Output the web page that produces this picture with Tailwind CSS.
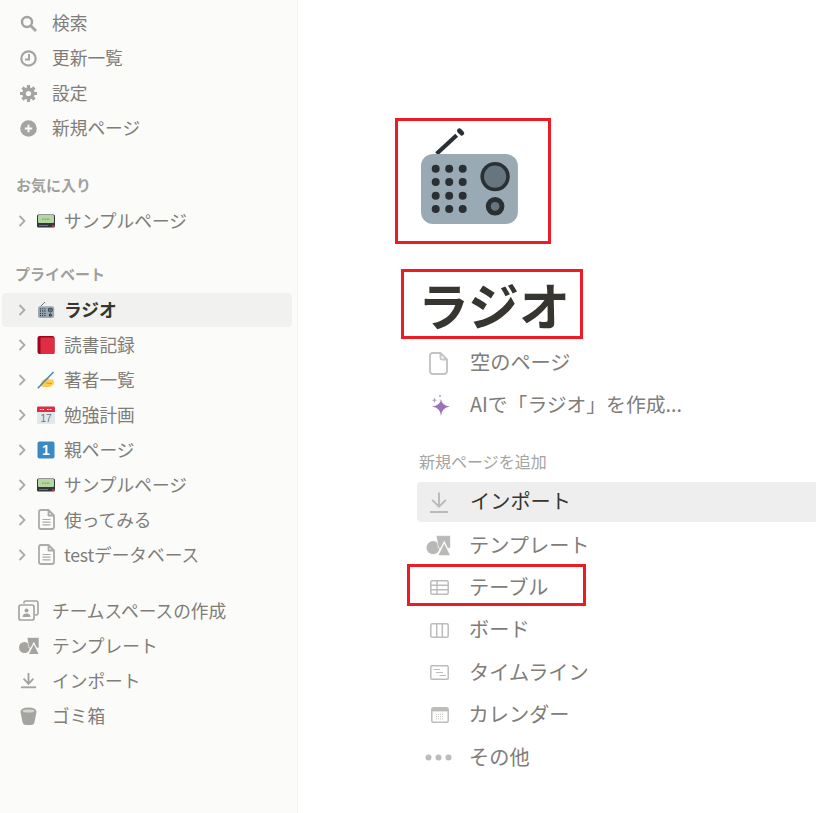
<!DOCTYPE html>
<html lang="ja">
<head>
  <meta charset="UTF-8" />
  <title>ラジオ</title>
  <script src="https://cdn.jsdelivr.net/npm/@tailwindcss/browser@4"></script>
</head>
<body class="h-[813px] overflow-hidden bg-white font-['Noto_Sans_CJK_JP','Noto_Sans',sans-serif] text-[17.7px]">
  <!-- shared icons -->
  <svg class="absolute w-0 h-0" aria-hidden="true">
    <symbol id="chev" viewBox="0 0 10 14"><path d="M2.5 2 L7.5 7 L2.5 12" fill="none" stroke="#ababa9" stroke-width="1.8"/></symbol>
    <symbol id="radio" viewBox="0 0 36 36">
      <path d="M7.2 10.6 L13.9 4.4" stroke="#292f33" stroke-width="1.4"/>
      <path d="M14.8 2.9 L15.6 3.7" stroke="#292f33" stroke-width="1.6" stroke-linecap="round"/>
      <rect x="2" y="10.7" width="32.3" height="23.3" rx="4" fill="#99aab5"/>
      <g fill="#292f33">
        <circle cx="6.9" cy="15.6" r="1.33"/><circle cx="11.4" cy="15.6" r="1.33"/><circle cx="15.9" cy="15.6" r="1.33"/>
        <circle cx="6.9" cy="20" r="1.33"/><circle cx="11.4" cy="20" r="1.33"/><circle cx="15.9" cy="20" r="1.33"/>
        <circle cx="6.9" cy="24.6" r="1.33"/><circle cx="11.4" cy="24.6" r="1.33"/><circle cx="15.9" cy="24.6" r="1.33"/>
        <circle cx="6.9" cy="29" r="1.33"/><circle cx="11.4" cy="29" r="1.33"/><circle cx="15.9" cy="29" r="1.33"/>
        <circle cx="26.7" cy="18.2" r="4.9"/><circle cx="26.7" cy="28.1" r="3.1"/>
      </g>
      <circle cx="26.7" cy="18.2" r="3.7" fill="#66757f"/>
      <circle cx="26.7" cy="28.1" r="1.45" fill="#66757f"/>
    </symbol>
    <symbol id="pager" viewBox="0 0 18 18">
      <rect x="0" y="2.5" width="18" height="13" rx="1.5" fill="#31373d"/>
      <rect x="1" y="3" width="16" height="8" rx="1" fill="#b4d7a0"/>
      <path d="M5 7.2h8" stroke="#77a05f" stroke-width="1.2" stroke-dasharray="1 .6"/>
      <rect x="15" y="13" width="2.4" height="1.8" fill="#dd2e44"/>
      <rect x="2" y="13" width="9" height="1" fill="#66757f"/>
    </symbol>
    <symbol id="book" viewBox="0 0 18 18">
      <rect x="0.5" y="0" width="17" height="18" rx="2" fill="#a0041e"/>
      <rect x="3.5" y="1.6" width="14" height="16.4" rx="1" fill="#dd2e44"/>
    </symbol>
    <symbol id="hand" viewBox="0 0 18 18">
      <path d="M5 9.5 L10.5 6.5 L12.5 8.5 L16 8.5 Q18 11 16.5 13.5 L13 16 L6 16 Q3.5 15.5 3.5 13 Z" fill="#ffcc4d"/>
      <path d="M0.8 17.2 L16.5 1" stroke="#3b88c3" stroke-width="1.5"/>
      <path d="M9 12 L15 12.6" stroke="#f19020" stroke-width="1"/>
    </symbol>
    <symbol id="doc" viewBox="0 0 17 21">
      <path d="M3 1 H10.5 L16 6.5 V18 Q16 20 14 20 H3 Q1 20 1 18 V3 Q1 1 3 1 Z M10.5 1 V6.5 H16" fill="none" stroke="currentColor" stroke-width="1.8" stroke-linejoin="round"/>
      <path d="M4.5 10.5h8M4.5 13.2h8M4.5 15.9h8" stroke="currentColor" stroke-width="1.2"/>
    </symbol>
    <symbol id="blank" viewBox="0 0 19 23">
      <path d="M3.5 1 H11.5 L18 7.5 V19 Q18 22 15 22 H4 Q1 22 1 19 V3.5 Q1 1 3.5 1 Z M11.5 1 V6 Q11.5 7.5 13 7.5 H18" fill="none" stroke="currentColor" stroke-width="1.9" stroke-linejoin="round"/>
    </symbol>
    <symbol id="shapes" viewBox="0 0 20 17.5">
      <circle cx="5.5" cy="10.5" r="5.5" fill="currentColor"/>
      <path d="M8 .5 H20 V11 H10 Z" fill="currentColor" stroke="#fcfcfb" stroke-width="0.6"/>
      <path d="M14.8 6 L20.5 17.5 H9 Z" fill="currentColor" stroke="#fcfcfb" stroke-width="1.2"/>
    </symbol>
    <symbol id="download" viewBox="0 0 18 18">
      <path d="M9 1 V11.5 M3.8 7 L9 12.5 L14.2 7" fill="none" stroke="currentColor" stroke-width="2"/>
      <path d="M1 16.2 H17" stroke="currentColor" stroke-width="2"/>
    </symbol>
  </svg>

  <div class="flex h-full">
    <!-- sidebar -->
    <aside class="w-[298px] shrink-0 h-full bg-[#fbfbfa] border-r border-[#f3f3f1] pt-[5.5px] text-[#807d78] [&_span]:pb-[1px]">
      <div class="flex items-center h-[35px] pl-[20px] gap-[15px]">
        <svg class="w-[17px] h-[17px]" viewBox="0 0 17 17"><circle cx="7" cy="7" r="5" fill="none" stroke="#a5a4a1" stroke-width="2.5"/><path d="M10.5 10.5 L16 16" stroke="#a5a4a1" stroke-width="2.8"/></svg>
        <span>検索</span>
      </div>
      <div class="flex items-center h-[35px] pl-[20px] gap-[15px]">
        <svg class="w-[17px] h-[17px]" viewBox="0 0 17 17"><circle cx="8.5" cy="8.5" r="7.2" fill="none" stroke="#a5a4a1" stroke-width="2.2"/><path d="M9 4 V9.4 H5" fill="none" stroke="#a5a4a1" stroke-width="2"/></svg>
        <span>更新一覧</span>
      </div>
      <div class="flex items-center h-[35px] pl-[20px] gap-[15px]">
        <svg class="w-[17px] h-[17px]" viewBox="0 0 17 17"><g stroke="#a5a4a1" stroke-width="3.2"><path d="M8.5 0 V17M0 8.5 H17M2.5 2.5 L14.5 14.5M14.5 2.5 L2.5 14.5"/></g><circle cx="8.5" cy="8.5" r="6.2" fill="#a5a4a1"/><circle cx="8.5" cy="8.5" r="2.6" fill="#fbfbfa"/></svg>
        <span>設定</span>
      </div>
      <div class="flex items-center h-[35px] pl-[20px] gap-[15px]">
        <svg class="w-[17px] h-[17px]" viewBox="0 0 17 17"><circle cx="8.5" cy="8.5" r="8.3" fill="#a5a4a1"/><path d="M8.5 4.8 V12.2M4.8 8.5 H12.2" stroke="#fbfbfa" stroke-width="1.9"/></svg>
        <span>新規ページ</span>
      </div>

      <div class="mt-[24px] mb-[2px] h-[32px] flex items-center pl-[16px] text-[15px] font-bold text-[#a09f9b]">お気に入り</div>
      <div class="flex items-center h-[35px] pl-[17px]">
        <svg class="w-[10px] h-[14px]"><use href="#chev"/></svg>
        <svg class="w-[18px] h-[18px] ml-[10px]"><use href="#pager"/></svg>
        <span class="ml-[9px]">サンプルページ</span>
      </div>

      <div class="mt-[20px] mb-[2px] h-[32px] flex items-center pl-[15px] text-[15px] font-bold text-[#a09f9b]">プライベート</div>
      <div class="flex items-center h-[34px] mx-[2px] my-[0.5px] w-[290px] pl-[15px] rounded bg-[#f1f1ef] font-bold text-[#37352f]">
        <svg class="w-[10px] h-[14px]"><use href="#chev"/></svg>
        <svg class="w-[18px] h-[18px] ml-[10px]"><use href="#radio"/></svg>
        <span class="ml-[9px]">ラジオ</span>
      </div>
      <div class="flex items-center h-[35px] pl-[17px]">
        <svg class="w-[10px] h-[14px]"><use href="#chev"/></svg>
        <svg class="w-[18px] h-[18px] ml-[10px]"><use href="#book"/></svg>
        <span class="ml-[9px]">読書記録</span>
      </div>
      <div class="flex items-center h-[35px] pl-[17px]">
        <svg class="w-[10px] h-[14px]"><use href="#chev"/></svg>
        <svg class="w-[18px] h-[18px] ml-[10px]"><use href="#hand"/></svg>
        <span class="ml-[9px]">著者一覧</span>
      </div>
      <div class="flex items-center h-[35px] pl-[17px]">
        <svg class="w-[10px] h-[14px]"><use href="#chev"/></svg>
        <svg class="w-[18px] h-[18px] ml-[10px]" viewBox="0 0 18 18">
          <rect x="0" y="4" width="18" height="14" rx="1" fill="#e1e8ed"/>
          <path d="M0 1.5 Q0 .5 1 .5 H17 Q18 .5 18 1.5 V6 H0 Z" fill="#dd2e44"/>
          <path d="M3 3.5h4M10 3.5h5" stroke="#fff" stroke-width="1.2" stroke-dasharray="1 .5"/>
          <text x="9" y="16" text-anchor="middle" font-size="10" font-family="Liberation Sans" fill="#66757f">17</text>
        </svg>
        <span class="ml-[9px]">勉強計画</span>
      </div>
      <div class="flex items-center h-[35px] pl-[17px]">
        <svg class="w-[10px] h-[14px]"><use href="#chev"/></svg>
        <svg class="w-[18px] h-[18px] ml-[10px]" viewBox="0 0 18 18">
          <rect x="0.5" y="0.5" width="17" height="17" rx="2" fill="#3b88c3"/>
          <text x="9" y="14.2" text-anchor="middle" font-size="14" font-weight="700" font-family="Liberation Sans" fill="#fff">1</text>
        </svg>
        <span class="ml-[9px]">親ページ</span>
      </div>
      <div class="flex items-center h-[35px] pl-[17px]">
        <svg class="w-[10px] h-[14px]"><use href="#chev"/></svg>
        <svg class="w-[18px] h-[18px] ml-[10px]"><use href="#pager"/></svg>
        <span class="ml-[9px]">サンプルページ</span>
      </div>
      <div class="flex items-center h-[35px] pl-[17px]">
        <svg class="w-[10px] h-[14px]"><use href="#chev"/></svg>
        <svg class="w-[17px] h-[21px] ml-[11px] text-[#ababa9]"><use href="#doc"/></svg>
        <span class="ml-[9px]">使ってみる</span>
      </div>
      <div class="flex items-center h-[35px] pl-[17px]">
        <svg class="w-[10px] h-[14px]"><use href="#chev"/></svg>
        <svg class="w-[17px] h-[21px] ml-[11px] text-[#ababa9]"><use href="#doc"/></svg>
        <div class="ml-[9px] tracking-[-0.2px] pb-[1px]">test<span class="tracking-normal">データベース</span></div>
      </div>

      <div class="mt-[21px] flex items-center h-[35px] pl-[18px] gap-[13px]">
        <svg class="w-[21px] h-[21px]" viewBox="0 0 21 21"><path d="M6 3.5 V2.5 Q6 1 7.5 1 H18 Q20 1 20 3 V13 Q20 15 18 15 H17" fill="none" stroke="#a5a4a1" stroke-width="1.6"/><rect x="1" y="5" width="15" height="15" rx="2" fill="none" stroke="#a5a4a1" stroke-width="1.7"/><circle cx="8.5" cy="10.5" r="2" fill="#a5a4a1"/><path d="M4.5 17 Q4.5 13.5 8.5 13.5 Q12.5 13.5 12.5 17 Z" fill="#a5a4a1"/></svg>
        <span>チームスペースの作成</span>
      </div>
      <div class="flex items-center h-[35px] pl-[19px] gap-[13px] text-[#a5a4a1]">
        <svg class="w-[20px] h-[17.5px]"><use href="#shapes"/></svg>
        <span class="text-[#807d78]">テンプレート</span>
      </div>
      <div class="flex items-center h-[35px] pl-[20px] gap-[15px] text-[#a5a4a1]">
        <svg class="w-[17px] h-[17px]"><use href="#download"/></svg>
        <span class="text-[#807d78]">インポート</span>
      </div>
      <div class="flex items-center h-[35px] pl-[20px] gap-[15px]">
        <svg class="w-[17px] h-[18px]" viewBox="0 0 17 18"><path d="M0.5 5 Q0.5 0.5 8.5 0.5 Q16.5 0.5 16.5 5 L14.5 15 Q14 18 11 18 H6 Q3 18 2.5 15 Z" fill="#a5a4a1"/><ellipse cx="8.5" cy="4" rx="6" ry="1.6" fill="#d6d5d3"/></svg>
        <span>ゴミ箱</span>
      </div>
    </aside>

    <!-- page -->
    <main class="relative flex-1 min-w-0 pt-[118px] text-[#807d78] text-[20.2px] [&_span]:pb-[2px]">
      <div class="ml-[97px] w-[156px] h-[126px] border-[3px] border-[#ed1c24] pl-[17px] pt-[1px]">
        <svg class="w-[108px] h-[108px]"><use href="#radio"/></svg>
      </div>
      <div class="ml-[103px] mt-[25px] w-[182px] h-[70px] border-[3px] border-[#ed1c24] pl-[14px] flex items-center">
        <h1 class="text-[51px] leading-none font-bold text-[#37352f] whitespace-nowrap">ラジオ</h1>
      </div>

      <div class="mt-[3px] pl-[119px]">
        <div class="flex items-center h-[42px] pr-0">
          <div class="w-[53px] pl-[12px]"><svg class="w-[19px] h-[23px] text-[#c4c4c2]"><use href="#blank"/></svg></div>
          <span>空のページ</span>
        </div>
        <div class="flex items-center h-[42px]">
          <div class="w-[53px] pl-[13px]"><svg class="w-[21px] h-[23px]" viewBox="0 0 21 23"><path d="M11 5 Q11.5 11.5 20 12.5 Q11.5 13.5 11 22 Q10.5 13.5 2 12.5 Q10.5 11.5 11 5 Z" fill="#9b72b8"/><path d="M4.5 3.5 Q4.8 6 7 6.3 Q4.8 6.6 4.5 9 Q4.2 6.6 2 6.3 Q4.2 6 4.5 3.5 Z" fill="#b99ace"/><circle cx="10" cy="2" r="1" fill="#b99ace"/></svg></div>
          <span class="text-[19.8px]">AIで「ラジオ」を作成...</span>
        </div>
      </div>

      <div class="mt-[22px] h-[26px] flex items-center pl-[121px] text-[16px] text-[#a5a4a1]">新規ページを追加</div>

      <div class="mt-[8px] flex items-center h-[40px] ml-[119px] rounded-l bg-[#eeeeee] text-[#37352f] pl-[12px]">
        <svg class="w-[20px] h-[23px] text-[#b9b9b7] mr-[21px]" viewBox="0 0 19 21"><path d="M9.5 1 V14 M3 8 L9.5 14.5 L16 8 M1 19.5 H18" fill="none" stroke="currentColor" stroke-width="1.8"/></svg>
        <span>インポート</span>
      </div>
      <div class="mt-[2.5px] flex items-center h-[42.5px] ml-[119px] pl-[9px]">
        <svg class="w-[25px] h-[21px] text-[#b9b9b7] mr-[18px]"><use href="#shapes"/></svg>
        <span>テンプレート</span>
      </div>
      <div class="relative flex items-center h-[42.5px] ml-[119px] pl-[13px] -mt-[0.5px]">
        <svg class="w-[19px] h-[15px] mr-[20px]" viewBox="0 0 19 15"><rect x="0.8" y="0.8" width="17.4" height="13.4" rx="1.5" fill="none" stroke="#bcbcba" stroke-width="1.5"/><path d="M1 5.2 H18 M1 9.8 H18 M7 1 V14" stroke="#bcbcba" stroke-width="1.4"/></svg>
        <span>テーブル</span>
        <div class="absolute left-[-10px] -top-[2.5px] w-[179px] h-[42px] border-[3px] border-[#ed1c24]"></div>
      </div>
      <div class="flex items-center h-[42.5px] ml-[119px] pl-[13px]">
        <svg class="w-[19px] h-[15px] mr-[20px]" viewBox="0 0 19 15"><rect x="0.8" y="0.8" width="17.4" height="13.4" rx="1.5" fill="none" stroke="#bcbcba" stroke-width="1.5"/><path d="M6.7 1 V14 M12.3 1 V14" stroke="#bcbcba" stroke-width="1.5"/></svg>
        <span>ボード</span>
      </div>
      <div class="flex items-center h-[42.5px] ml-[119px] pl-[13px]">
        <svg class="w-[19px] h-[15px] mr-[20px]" viewBox="0 0 19 15"><rect x="0.8" y="0.8" width="17.4" height="13.4" rx="1" fill="none" stroke="#bcbcba" stroke-width="1.5"/><path d="M3.5 4.5 H10 M6 7.5 H13 M9.5 10.5 H16" stroke="#bcbcba" stroke-width="1.2"/></svg>
        <span>タイムライン</span>
      </div>
      <div class="flex items-center h-[42.5px] ml-[119px] pl-[13.5px]">
        <svg class="w-[18px] h-[16px] mr-[20px]" viewBox="0 0 18 16"><rect x="0.8" y="0.8" width="16.4" height="14.4" rx="1.5" fill="none" stroke="#bcbcba" stroke-width="1.5"/><rect x="1" y="1" width="16" height="3.4" fill="#bcbcba"/><path d="M5 7.3 H13 M5 9.6 H13 M5 11.9 H13" stroke="#bcbcba" stroke-width="1" stroke-dasharray="1 1"/></svg>
        <span>カレンダー</span>
      </div>
      <div class="flex items-center h-[42.5px] ml-[119px] pl-[8px]">
        <svg class="w-[27px] h-[7px] mr-[17px]" viewBox="0 0 27 7"><circle cx="3.5" cy="3.5" r="3" fill="#bcbcba"/><circle cx="13.5" cy="3.5" r="3" fill="#bcbcba"/><circle cx="23.5" cy="3.5" r="3" fill="#bcbcba"/></svg>
        <span>その他</span>
      </div>
    </main>
  </div>
</body>
</html>
